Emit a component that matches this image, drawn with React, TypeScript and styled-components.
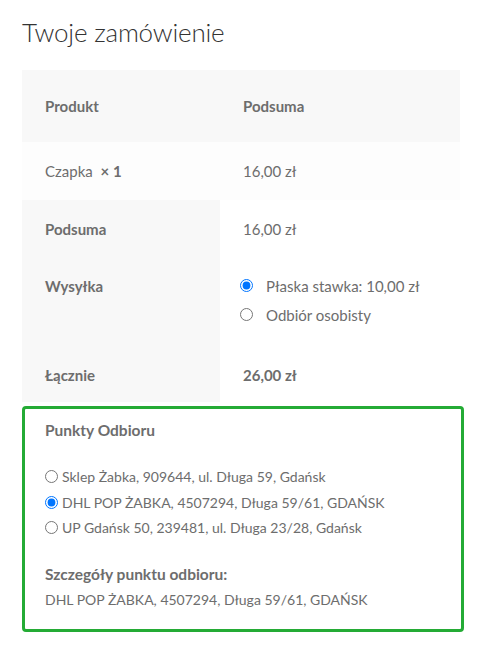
import React from "react";
import styled, { createGlobalStyle } from "styled-components";

const Global = createGlobalStyle`
  html, body { margin: 0; padding: 0; background: #fff; }
  body { font-family: "Lato", "Liberation Sans", sans-serif; color: #6d6d6d; }
`;

const Page = styled.div`
  padding: 15px 23px 22px 22px;
  width: 483px;
  box-sizing: border-box;
`;

const Title = styled.h3`
  margin: 0 0 21px 0;
  font-family: "Lato", sans-serif;
  font-weight: 300;
  font-size: 26px;
  line-height: 34px;
  color: #333;
  letter-spacing: -0.2px;
`;

const Table = styled.table`
  width: 438px;
  border-collapse: collapse;
  border-spacing: 0;
  font-size: 15px;
  line-height: 26px;
`;

const HeadCell = styled.th<{ $w?: number }>`
  background: #f8f8f8;
  text-align: left;
  font-weight: 700;
  padding: 22px 22px 22px 23px;
  height: 72px;
  width: ${(p) => (p.$w ? `${p.$w}px` : "auto")};
  box-sizing: border-box;
`;

const BodyCell = styled.td`
  background: #fdfdfd;
  padding: 16px 22px 16px 23px;
  font-weight: 400;
  vertical-align: top;
`;

const Qty = styled.strong`
  font-weight: 700;
  margin-left: 4px;
`;

const FootHead = styled.th<{ $pad?: string }>`
  background: #f8f8f8;
  text-align: left;
  font-weight: 700;
  padding: ${(p) => p.$pad || "16px 22px 16px 23px"};
  vertical-align: top;
`;

const FootCell = styled.td<{ $bold?: boolean; $pad?: string }>`
  background: #fff;
  padding: ${(p) => p.$pad || "16px 22px 16px 23px"};
  font-weight: ${(p) => (p.$bold ? 700 : 400)};
  vertical-align: top;
`;

const ShipList = styled.ul`
  list-style: none;
  margin: 0;
  padding: 0;
`;

const ShipItem = styled.li`
  display: flex;
  align-items: center;
  height: 29px;
`;

const ShipRadio = styled.input`
  margin: 0 13px 0 0;
  width: 13px;
  height: 13px;
`;

const Box = styled.div`
  margin-top: 4px;
  width: 442px;
  box-sizing: border-box;
  border: 3px solid #24ab35;
  border-radius: 4px;
  padding: 8px 20px 16px 20px;
  font-size: 14px;
  line-height: 26px;
`;

const BoxTitle = styled.div`
  font-weight: 700;
  font-size: 15.5px;
  margin-bottom: 21px;
`;

const PointRow = styled.label`
  display: flex;
  align-items: center;
  line-height: 25.5px;
`;

const PointRadio = styled.input`
  margin: 0 4px 0 0;
  width: 13px;
  height: 13px;
`;

const PointList = styled.div`
  margin-bottom: 20px;
`;

const DetailTitle = styled.div`
  font-weight: 700;
  font-size: 15.5px;
`;

const points = [
  "Sklep Żabka, 909644, ul. Długa 59, Gdańsk",
  "DHL POP ŻABKA, 4507294, Długa 59/61, GDAŃSK",
  "UP Gdańsk 50, 239481, ul. Długa 23/28, Gdańsk",
];

export default function App() {
  return (
    <Page>
      <Global />
      <Title>Twoje zamówienie</Title>
      <Table>
        <thead>
          <tr>
            <HeadCell $w={198}>Produkt</HeadCell>
            <HeadCell>Podsuma</HeadCell>
          </tr>
        </thead>
        <tbody>
          <tr>
            <BodyCell>
              Czapka <Qty>× 1</Qty>
            </BodyCell>
            <BodyCell>16,00 zł</BodyCell>
          </tr>
        </tbody>
        <tfoot>
          <tr>
            <FootHead>Podsuma</FootHead>
            <FootCell>16,00 zł</FootCell>
          </tr>
          <tr>
            <FootHead $pad="15px 22px 16px 23px">Wysyłka</FootHead>
            <FootCell $pad="13px 22px 17px 20px">
              <ShipList>
                <ShipItem>
                  <ShipRadio type="radio" name="ship" defaultChecked readOnly />
                  Płaska stawka: 10,00 zł
                </ShipItem>
                <ShipItem>
                  <ShipRadio type="radio" name="ship" readOnly />
                  Odbiór osobisty
                </ShipItem>
              </ShipList>
            </FootCell>
          </tr>
          <tr>
            <FootHead $pad="16px 22px 14px 23px">Łącznie</FootHead>
            <FootCell $bold $pad="16px 22px 14px 23px">26,00 zł</FootCell>
          </tr>
        </tfoot>
      </Table>
      <Box>
        <BoxTitle>Punkty Odbioru</BoxTitle>
        <PointList>
          {points.map((p, i) => (
            <PointRow key={p}>
              <PointRadio type="radio" name="point" defaultChecked={i === 1} />
              {p}
            </PointRow>
          ))}
        </PointList>
        <DetailTitle>Szczegóły punktu odbioru:</DetailTitle>
        <div>{points[1]}</div>
      </Box>
    </Page>
  );
}
